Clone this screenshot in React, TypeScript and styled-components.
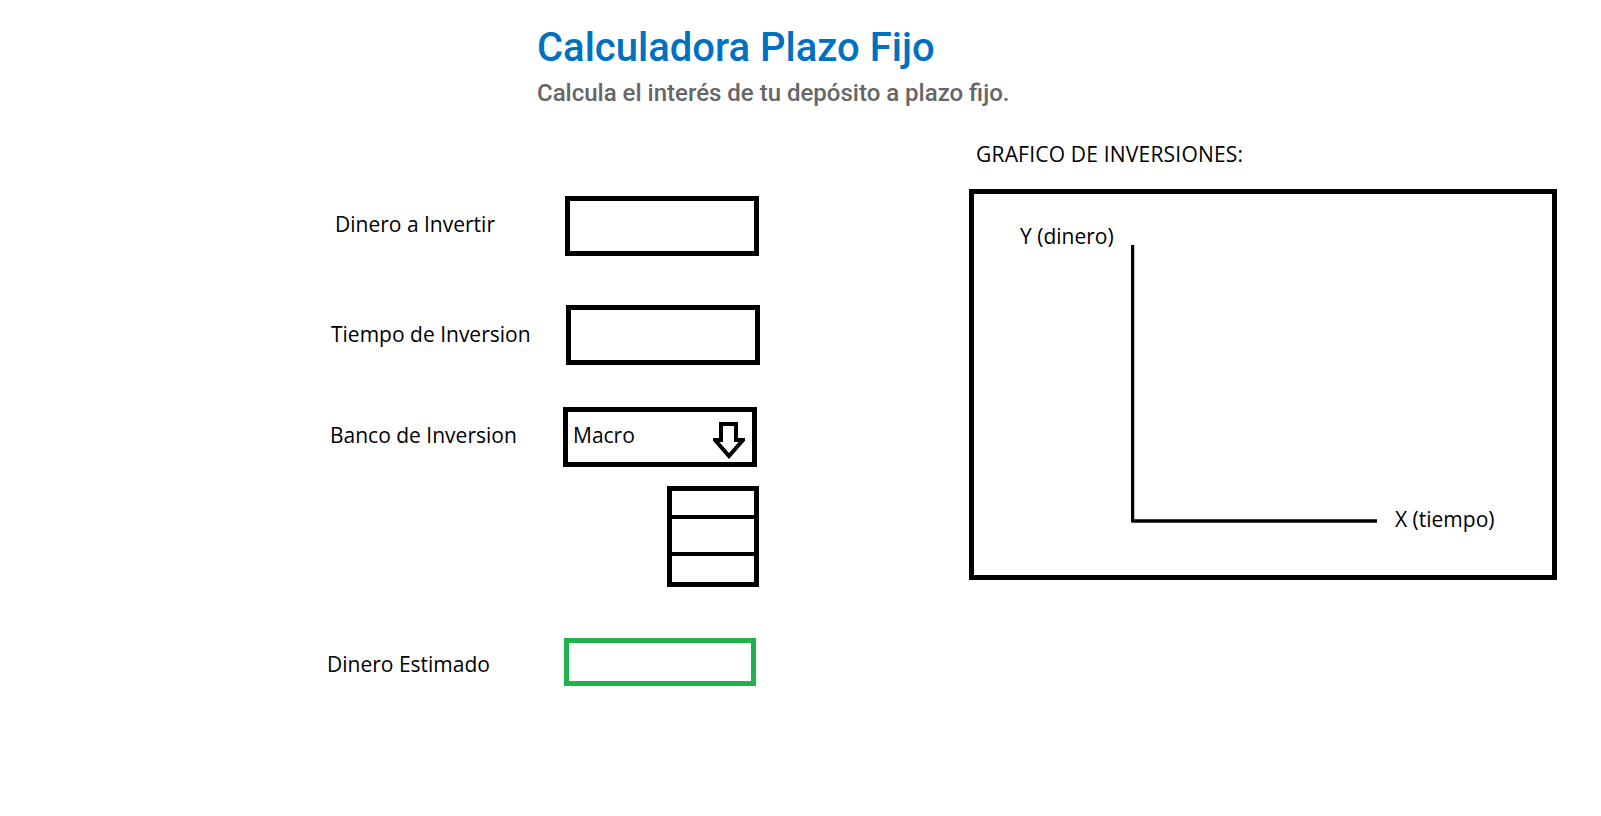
import React from "react";
import styled, { createGlobalStyle } from "styled-components";

const GlobalStyle = createGlobalStyle`
  html, body { margin: 0; padding: 0; background: #ffffff; }
  body { font-family: "Open Sans", "Noto Sans", sans-serif; color: #000; }
  * { box-sizing: border-box; }
`;

const Page = styled.div`
  width: 1601px;
  min-height: 816px;
  background: #fff;
`;

const Header = styled.header`
  padding: 24px 0 0 537px;
`;

const Title = styled.h1`
  margin: 0;
  font-family: Roboto, "Liberation Sans", sans-serif;
  font-weight: 500;
  font-size: 40px;
  line-height: 48px;
  color: #0070c0;
`;

const Subtitle = styled.p`
  margin: 7px 0 0;
  font-family: Roboto, "Liberation Sans", sans-serif;
  font-weight: 500;
  font-size: 24px;
  line-height: 28px;
  color: #666666;
`;

const Main = styled.main`
  display: flex;
  align-items: flex-start;
  padding-top: 1px;
`;

const Form = styled.section`
  flex: 0 0 969px;
  display: flex;
  flex-direction: column;
  padding: 88px 0 0 327px;
`;

const Row = styled.div<{ $top: number }>`
  display: grid;
  grid-template-columns: 236px auto;
  align-items: center;
  margin-top: ${(p) => p.$top}px;
`;

const Label = styled.label<{ $indent: number; $lift?: number }>`
  padding-left: ${(p) => p.$indent}px;
  margin-bottom: ${(p) => p.$lift ?? 2}px;
  font-size: 21px;
  line-height: 26px;
  white-space: nowrap;
`;

const Field = styled.div<{ $shift: number; $w: number; $h: number; $color?: string }>`
  margin-left: ${(p) => p.$shift}px;
  width: ${(p) => p.$w}px;
  height: ${(p) => p.$h}px;
  border: 5px solid ${(p) => p.$color ?? "#000"};
  background: #fff;
`;

const Select = styled.div`
  width: 194px;
  height: 60px;
  border: 5px solid #000;
  display: flex;
  align-items: center;
  justify-content: space-between;
  padding: 0 7px 0 5px;
`;

const SelectValue = styled.span`
  font-size: 21px;
  line-height: 26px;
  margin-bottom: 4px;
`;

const ArrowIcon = styled.svg`
  display: block;
  margin-top: 6px;
`;

const OptionList = styled.div`
  margin-left: 104px;
  width: 92px;
  border: 5px solid #000;
  display: flex;
  flex-direction: column;
`;

const OptionCell = styled.div<{ $h: number; $last?: boolean }>`
  height: ${(p) => p.$h}px;
  border-bottom: ${(p) => (p.$last ? "none" : "4px solid #000")};
`;

const ChartColumn = styled.section`
  flex: 0 0 588px;
  padding-top: 33px;
`;

const ChartTitle = styled.h2`
  margin: 0 0 22px 7px;
  font-weight: 400;
  font-size: 21px;
  line-height: 26px;
  letter-spacing: 0.2px;
`;

const ChartBox = styled.div`
  width: 588px;
  height: 391px;
  border: 5px solid #000;
  padding: 29px 0 0 46px;
`;

const Plot = styled.div`
  display: flex;
  align-items: stretch;
`;

const AxisLabelY = styled.span`
  flex: 0 0 111px;
  align-self: flex-start;
  font-size: 21px;
  line-height: 26px;
  white-space: nowrap;
`;

const Axes = styled.svg`
  display: block;
  flex: 0 0 auto;
  margin: 22px 0 9px;
`;

const AxisLabelX = styled.span`
  align-self: flex-end;
  margin-left: 18px;
  font-size: 21px;
  line-height: 26px;
  white-space: nowrap;
`;

export default function App() {
  return (
    <Page>
      <GlobalStyle />
      <Header>
        <Title>Calculadora Plazo Fijo</Title>
        <Subtitle>Calcula el interés de tu depósito a plazo fijo.</Subtitle>
      </Header>
      <Main>
        <Form>
          <Row $top={0}>
            <Label $indent={8} $lift={4}>Dinero a Invertir</Label>
            <Field $shift={2} $w={194} $h={60} />
          </Row>
          <Row $top={49}>
            <Label $indent={4}>Tiempo de Inversion</Label>
            <Field $shift={3} $w={194} $h={60} />
          </Row>
          <Row $top={42}>
            <Label $indent={3} $lift={5}>Banco de Inversion</Label>
            <Select>
              <SelectValue>Macro</SelectValue>
              <ArrowIcon width="32" height="37" viewBox="0 0 32 37">
                <polygon
                  points="8,2 23,2 23,18 30,18 16,34 2,18 8,18"
                  fill="none"
                  stroke="#000"
                  strokeWidth="4"
                  strokeLinejoin="miter"
                />
              </ArrowIcon>
            </Select>
          </Row>
          <Row $top={19}>
            <span />
            <OptionList>
              <OptionCell $h={28} />
              <OptionCell $h={37} />
              <OptionCell $h={26} $last />
            </OptionList>
          </Row>
          <Row $top={51}>
            <Label $indent={0} $lift={-3}>Dinero Estimado</Label>
            <Field $shift={1} $w={192} $h={48} $color="#22b14c" />
          </Row>
        </Form>
        <ChartColumn>
          <ChartTitle>GRAFICO DE INVERSIONES:</ChartTitle>
          <ChartBox>
            <Plot>
              <AxisLabelY>Y (dinero)</AxisLabelY>
              <Axes width="246" height="278" viewBox="0 0 246 278">
                <polyline
                  points="1.5,0 1.5,276 246,276"
                  fill="none"
                  stroke="#000"
                  strokeWidth="3.5"
                  strokeLinejoin="round"
                />
              </Axes>
              <AxisLabelX>X (tiempo)</AxisLabelX>
            </Plot>
          </ChartBox>
        </ChartColumn>
      </Main>
    </Page>
  );
}
